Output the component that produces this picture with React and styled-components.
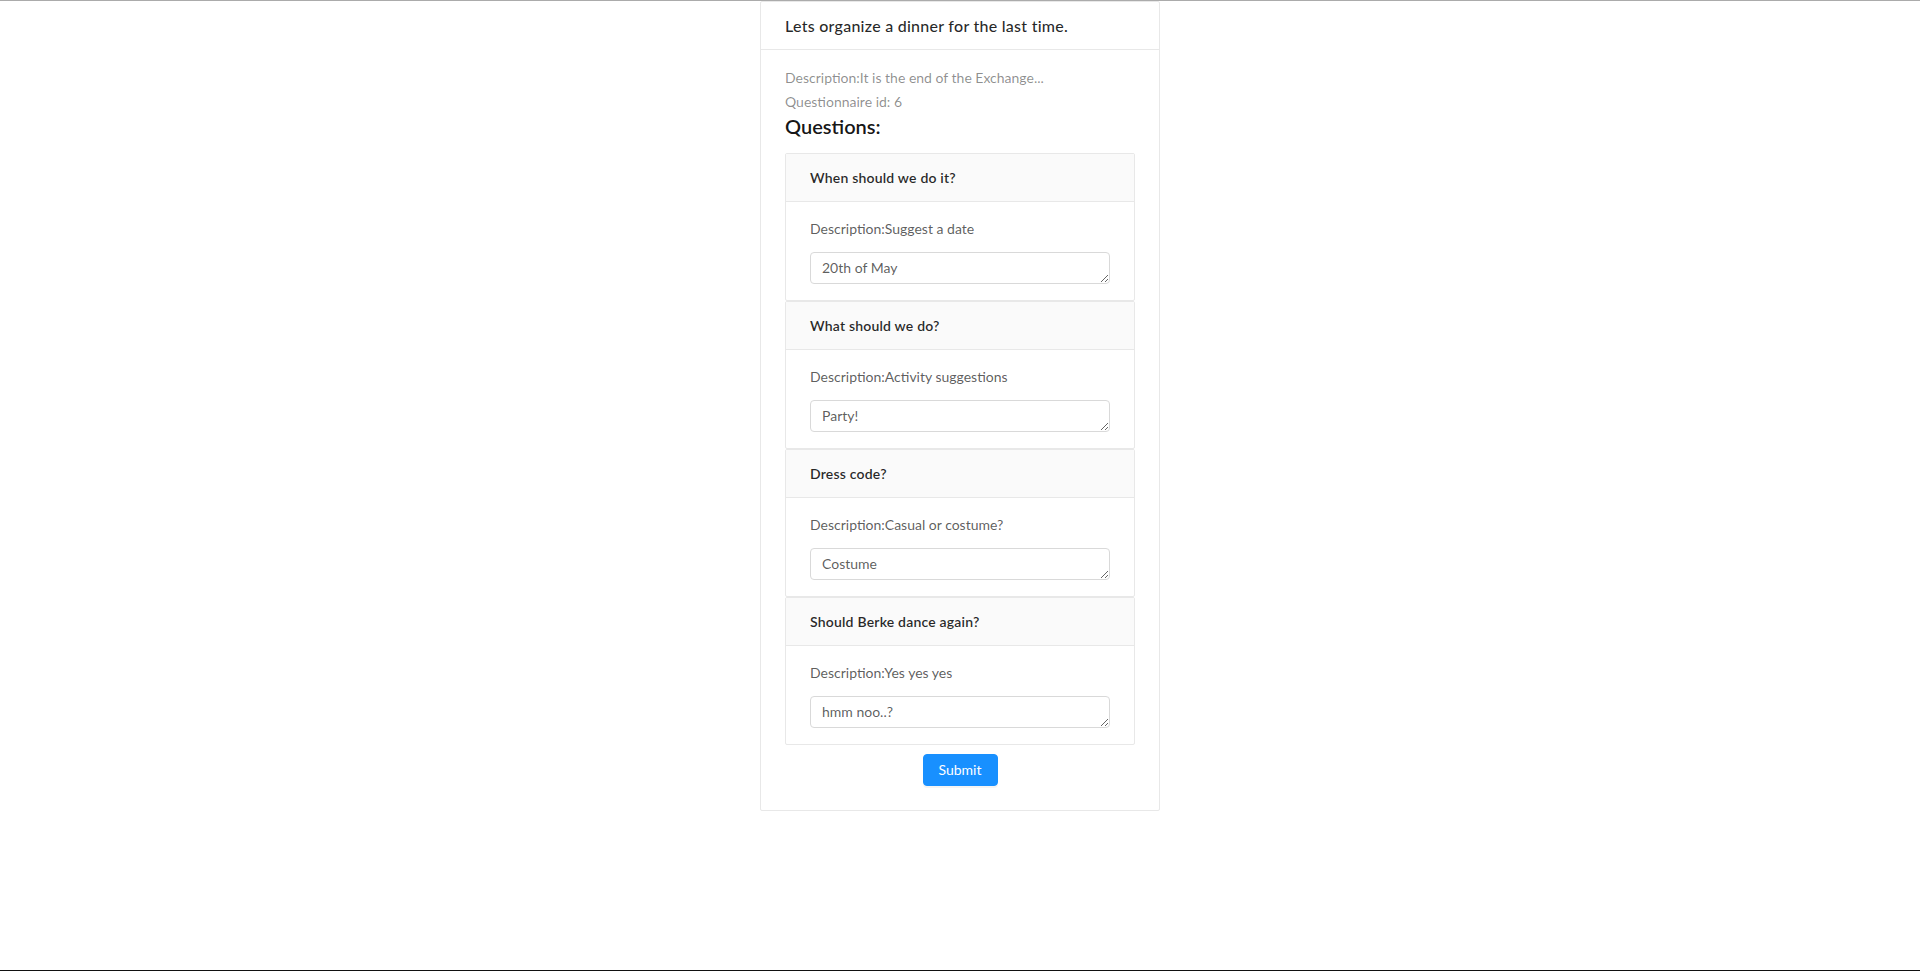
import React from "react";
import styled, { createGlobalStyle } from "styled-components";

const GlobalStyle = createGlobalStyle`
  html, body {
    margin: 0;
    padding: 0;
    background: #ffffff;
  }
  body {
    font-family: "Segoe UI", Lato, "Noto Sans", sans-serif;
    font-size: 14px;
    color: rgba(0, 0, 0, 0.65);
  }
  * { box-sizing: border-box; }
`;

const Page = styled.div`
  min-height: 100vh;
  border-top: 1px solid #ababab;
  border-bottom: 1px solid #111111;
  display: flex;
  justify-content: center;
  align-items: flex-start;
`;

const Card = styled.div`
  width: 400px;
  background: #fff;
  border: 1px solid #e8e8e8;
  border-radius: 2px;
`;

const CardHead = styled.div`
  height: 48px;
  padding: 0 24px;
  display: flex;
  align-items: center;
  border-bottom: 1px solid #e8e8e8;
  font-size: 16px;
  font-weight: 500;
  letter-spacing: 0.26px;
  color: rgba(0, 0, 0, 0.85);
`;

const CardBody = styled.div`
  padding: 16px 24px 24px;
`;

const MetaLine = styled.div`
  font-size: 14px;
  line-height: 24px;
  color: rgba(0, 0, 0, 0.45);
`;

const Heading = styled.h3`
  margin: 0 0 15px;
  font-size: 20px;
  line-height: 24px;
  font-weight: 600;
  color: rgba(0, 0, 0, 0.92);
`;

const QuestionCard = styled.div`
  border: 1px solid #e8e8e8;
  border-radius: 2px;
  background: #fff;
`;

const QuestionHead = styled.div`
  height: 48px;
  padding: 0 24px 1px;
  display: flex;
  align-items: center;
  background: #fafafa;
  border-bottom: 1px solid #e8e8e8;
  font-size: 14px;
  font-weight: 600;
  letter-spacing: 0.2px;
  color: rgba(0, 0, 0, 0.85);
`;

const QuestionBody = styled.div`
  padding: 16px 24px;
`;

const QuestionDesc = styled.p`
  margin: 0 0 12px;
  font-size: 14px;
  line-height: 22px;
  color: rgba(0, 0, 0, 0.65);
`;

const Answer = styled.textarea`
  display: block;
  width: 300px;
  height: 32px;
  min-height: 32px;
  padding: 4px 11px;
  border: 1px solid #d9d9d9;
  border-radius: 4px;
  font-family: inherit;
  font-size: 14px;
  line-height: 22px;
  color: rgba(0, 0, 0, 0.65);
  background: #fff;
  outline: none;
  overflow: hidden;
`;

const Actions = styled.div`
  display: flex;
  justify-content: center;
  margin-top: 9px;
`;

const Button = styled.button`
  height: 32px;
  padding: 0 15px;
  border: 1px solid #1890ff;
  border-radius: 4px;
  background: #1890ff;
  color: #fff;
  font-family: inherit;
  font-size: 14px;
  line-height: 22px;
  cursor: pointer;
  box-shadow: 0 2px 0 rgba(0, 0, 0, 0.045);
`;

const questions = [
  { title: "When should we do it?", desc: "Suggest a date", answer: "20th of May" },
  { title: "What should we do?", desc: "Activity suggestions", answer: "Party!" },
  { title: "Dress code?", desc: "Casual or costume?", answer: "Costume" },
  { title: "Should Berke dance again?", desc: "Yes yes yes", answer: "hmm noo..?" },
];

export default function App() {
  return (
    <>
      <GlobalStyle />
      <Page>
        <Card>
          <CardHead>Lets organize a dinner for the last time.</CardHead>
          <CardBody>
            <MetaLine>Description:It is the end of the Exchange...</MetaLine>
            <MetaLine>Questionnaire id: 6</MetaLine>
            <Heading>Questions:</Heading>
            {questions.map((q) => (
              <QuestionCard key={q.title}>
                <QuestionHead>{q.title}</QuestionHead>
                <QuestionBody>
                  <QuestionDesc>Description:{q.desc}</QuestionDesc>
                  <Answer defaultValue={q.answer} spellCheck={false} />
                </QuestionBody>
              </QuestionCard>
            ))}
            <Actions>
              <Button type="button">Submit</Button>
            </Actions>
          </CardBody>
        </Card>
      </Page>
    </>
  );
}
